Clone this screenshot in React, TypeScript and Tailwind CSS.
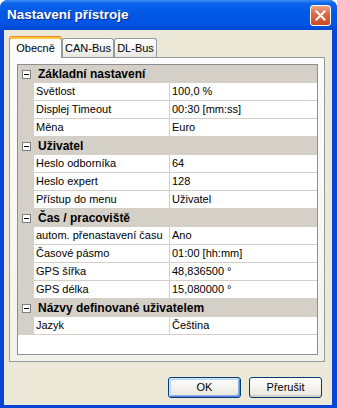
import React from 'react';

type Row = [string, string];

interface Section {
  title: string;
  rows: Row[];
}

const SECTIONS: Section[] = [
  {
    title: 'Základní nastavení',
    rows: [
      ['Světlost', '100,0 %'],
      ['Displej Timeout', '00:30 [mm:ss]'],
      ['Měna', 'Euro'],
    ],
  },
  {
    title: 'Uživatel',
    rows: [
      ['Heslo odborníka', '64'],
      ['Heslo expert', '128'],
      ['Přístup do menu', 'Uživatel'],
    ],
  },
  {
    title: 'Čas / pracoviště',
    rows: [
      ['autom. přenastavení času', 'Ano'],
      ['Časové pásmo', '01:00 [hh:mm]'],
      ['GPS šířka', '48,836500 °'],
      ['GPS délka', '15,080000 °'],
    ],
  },
  {
    title: 'Názvy definované uživatelem',
    rows: [['Jazyk', 'Čeština']],
  },
];

function MinusBox() {
  return (
    <span className="flex h-[9px] w-[9px] items-center justify-center border border-[#808080] bg-white">
      <span className="h-px w-[5px] bg-black" />
    </span>
  );
}

function CloseButton() {
  return (
    <div className="flex h-[21px] w-[21px] items-center justify-center rounded-[3px] border border-white bg-[linear-gradient(to_bottom,#eba68c_0%,#e0704b_35%,#cc4620_100%)]">
      <svg width="11" height="11" viewBox="0 0 11 11">
        <path d="M1.5 1.5 L9.5 9.5 M9.5 1.5 L1.5 9.5" stroke="white" strokeWidth="2" strokeLinecap="square" />
      </svg>
    </div>
  );
}

function Tab({ label, active, width }: { label: string; active?: boolean; width: string }) {
  if (active) {
    return (
      <div
        className={`${width} relative z-10 -mb-px flex h-[22px] items-start justify-center rounded-t-[3px] border border-b-0 border-[#919b9c] border-t-[#e68b2c] bg-[#fcfcfe] pt-[3px] shadow-[inset_0_2px_0_#ffc83c]`}
      >
        {label}
      </div>
    );
  }
  return (
    <div
      className={`${width} flex h-[19px] items-center justify-center rounded-t-[3px] border border-b-0 border-[#919b9c] bg-[linear-gradient(to_bottom,#ffffff_0%,#f3f3ef_60%,#e6e5df_100%)] pt-px`}
    >
      {label}
    </div>
  );
}

export default function App() {
  return (
    <div className="h-[408px] w-[337px] bg-white font-['Liberation_Sans',Arial,sans-serif] text-[11px] text-black">
      <div className="flex h-[408px] w-[337px] flex-col overflow-hidden rounded-t-[8px] bg-[#0845d6]">
        {/* Title bar */}
        <div className="flex h-[30px] shrink-0 items-center justify-between bg-[linear-gradient(to_bottom,#3d8ef6_0%,#0a63ea_12%,#0058e6_45%,#0454e3_80%,#0047d0_100%)] pl-[7px] pr-[6px]">
          <span className="text-[13.5px] font-bold text-white [text-shadow:1px_1px_0_#0b2d8a]">
            Nastavení přístroje
          </span>
          <CloseButton />
        </div>

        {/* Body */}
        <div className="ml-[4px] mr-[5px] mb-[3px] flex flex-1 flex-col bg-[#ece9d8] pl-[5px] pr-[7px] pt-[6px]">
          {/* Tabs */}
          <div className="flex h-[21px] items-end">
            <Tab label="Obecně" active width="w-[53px]" />
            <Tab label="CAN-Bus" width="w-[52px]" />
            <Tab label="DL-Bus" width="w-[43px]" />
          </div>

          {/* Tab page */}
          <div className="h-[305px] w-[316px] border border-[#919b9c] bg-[linear-gradient(to_bottom,#fcfcfe_0%,#f8f7f3_60%,#f2f1ea_100%)] pb-[6px] pl-[7px] pr-[6px] pt-[6px]">
            <div className="flex h-full flex-col border border-[#8e8f8f] bg-white">
              {SECTIONS.map((section) => (
                <div key={section.title}>
                  <div className="flex h-[18px] items-center bg-[#d4d0c8]">
                    <div className="flex w-[16px] shrink-0 pl-[4px]">
                      <MinusBox />
                    </div>
                    <span className="pl-[4px] text-[12px] font-bold">{section.title}</span>
                  </div>
                  {section.rows.map(([label, value]) => (
                    <div key={label} className="flex h-[18px]">
                      <div className="w-[16px] shrink-0 bg-[#d4d0c8]" />
                      <div className="flex w-[136px] shrink-0 items-center border-b border-r border-[#d4d0c8] pl-[2px]">
                        {label}
                      </div>
                      <div className="flex flex-1 items-center border-b border-[#d4d0c8] pl-[2px]">{value}</div>
                    </div>
                  ))}
                </div>
              ))}
            </div>
          </div>

          {/* Buttons */}
          <div className="mt-[15px] flex justify-end gap-[8px] pr-[3px]">
            <button className="flex h-[21px] w-[73px] items-center justify-center rounded-[3px] border border-[#003c74] bg-[linear-gradient(to_bottom,#ffffff_0%,#f4f3ee_50%,#e8e6dc_100%)] shadow-[inset_1px_1px_0_#cee7ff,inset_-1px_-1px_0_#6982ee,inset_2px_2px_0_#bcd4f6,inset_-2px_-2px_0_#89ade4]">
              OK
            </button>
            <button className="flex h-[21px] w-[73px] items-center justify-center rounded-[3px] border border-[#003c74] bg-[linear-gradient(to_bottom,#ffffff_0%,#f4f3ee_50%,#e8e6dc_100%)] shadow-[inset_0_-2px_0_#d6d0c5]">
              Přerušit
            </button>
          </div>
        </div>
      </div>
    </div>
  );
}
